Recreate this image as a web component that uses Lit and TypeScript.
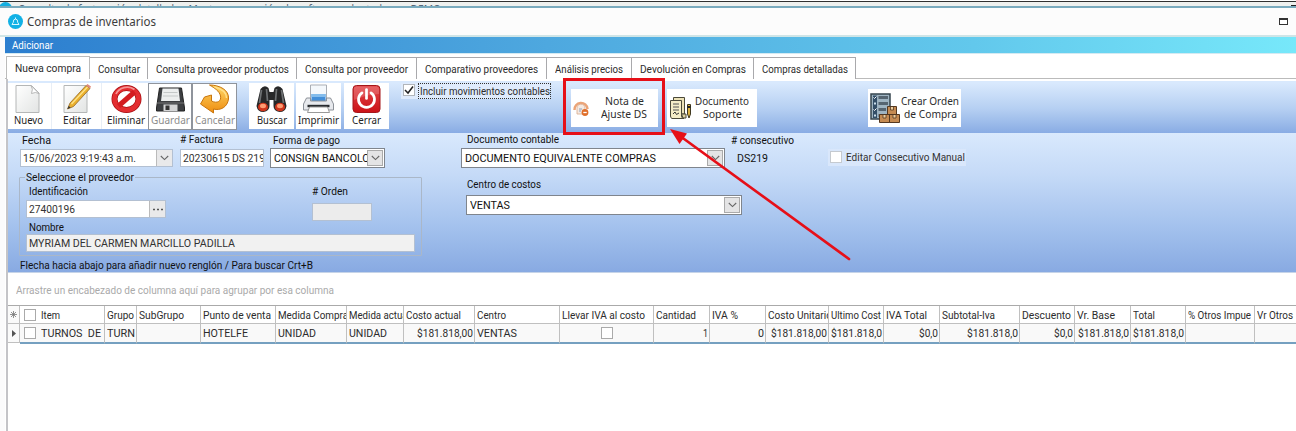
import { LitElement, html, css, svg, nothing } from "lit";
import { customElement, property } from "lit/decorators.js";
import { classMap } from "lit/directives/class-map.js";

/** A run of text that is condensed or widened to take a given width. */
@customElement("fit-text")
class FitText extends LitElement {
  @property() text = "";
  @property({ type: Number }) width = 0;
  static styles = css`
    :host { display: block; white-space: pre; flex: none; }
    span { display: inline-block; transform-origin: 0 50%; }
  `;
  updated() {
    const s = this.renderRoot.querySelector("span") as HTMLElement;
    s.style.transform = "none";
    const natural = s.getBoundingClientRect().width;
    if (!this.width || !natural) return;
    this.style.width = `${this.width}px`;
    s.style.transform = `scaleX(${(this.width / natural).toFixed(4)})`;
  }
  render() { return html`<span>${this.text}</span>`; }
}

const t = (text: string, width: number, cls = "") =>
  html`<fit-text class=${cls} .text=${text} .width=${width}></fit-text>`;

const chevron = html`<svg width="9" height="6" viewBox="0 0 9 6"><path d="M.8 1 4.5 4.6 8.2 1" fill="none" stroke="#666" stroke-width="1.1"/></svg>`;

const icons = {
  nuevo: svg`<path d="M2.500 1.500H18L25.500 9V28.500H2.500Z" fill="url(#pg)" stroke="#b4b6b6"/><path d="M17.500 1.500Q20 5 18 9.500 22 7.500 25.500 9.500Z" fill="#fff" stroke="#aaa" stroke-width=".8"/>`,
  editar: svg`<path d="M2.500 1.500H25.500V28.500H2.500Z" fill="url(#pg)" stroke="#b4b6b6"/><path d="M6 25 8.500 19 24.500 1.500 28.500 4.500 12 22.500Z" fill="#eab02d" stroke="#91672a" stroke-width=".8"/><path d="M10 20 26 3" stroke="#ffe48b" stroke-width="1.300"/><path d="M24.500 1.500 26 0 29.500 2.500 28.500 4.500Z" fill="#df8a7c"/><path d="m6 25 1.200-3 2 1.500Z" fill="#333"/>`,
  eliminar: svg`<ellipse cx="15" cy="15" rx="12" ry="11" fill="none" stroke="#a60e12" stroke-width="6"/><ellipse cx="15" cy="15" rx="12" ry="11" fill="none" stroke="#e32d30" stroke-width="4.600"/><path d="M7 22 23 8" stroke="#d31c20" stroke-width="5"/><path d="M4.500 10A12 11 0 0 1 23 5.500" stroke="#f59494" stroke-width="1.800" fill="none"/>`,
  guardar: svg`<path d="M4 4H26L29 24V27H1V24Z" fill="#3d3f42" stroke="#222"/><path d="M7 4.500H23L24.500 17H5.500Z" fill="#eceeee"/><path d="M8 8.500H22M7.500 12H22.500" stroke="#c4c8c8"/><path d="M1.500 19H28.500" stroke="#777"/><path d="M8 20.500H22V27H8Z" fill="#d5d6d7"/><path d="M10 21.500H14V26H10Z" fill="#333"/>`,
  cancelar: svg`<path d="M10 1C20 1 30 6 29 15 28 23 21 27 14 25L14 29 1 20 5 13 12 11V17C18 20 22 17 21 12 20 7 15 4 10 1Z" fill="url(#og)" stroke="#c8750d"/><path d="M15 3C23 5 27 9 27 14" fill="none" stroke="#ffe08a" stroke-width="1.500"/>`,
  buscar: svg`<path d="M4 5Q8 0 12 4L13 8H17L18 4Q22 0 26 5L30 22Q29 28 23 28 17 27 17 22V16H13V22Q13 27 7 28 1 28 0 22Z" fill="#272829"/><path d="M5 6 3 19M25 6 27 19M10 5 11 17M20 5 19 17" stroke="#6d7072" stroke-width="1.700"/><ellipse cx="6.500" cy="23" rx="5" ry="4.300" fill="#cf351b"/><ellipse cx="23.500" cy="23" rx="5" ry="4.300" fill="#cf351b"/><ellipse cx="6.500" cy="22" rx="3" ry="2.200" fill="#ff9c72"/><ellipse cx="23.500" cy="22" rx="3" ry="2.200" fill="#ff9c72"/>`,
  imprimir: svg`<path d="M7 1H23V16H7Z" fill="#f4f8fc" stroke="#a9adb4"/><path d="M8 10H22V18H8Z" fill="#438ed8"/><path d="M8 10H22V13H8Z" fill="#83bcec"/><path d="M3 14H7V17H23V14H27L30 20V26H0V20Z" fill="#e7e9ed" stroke="#8c9198"/><path d="M4 22H26" stroke="#272a2e" stroke-width="2.400"/><path d="M6 23H24L26 28.500H4Z" fill="#fff" stroke="#999"/>`,
  cerrar: svg`<rect x="1.500" y="1.500" width="27" height="27" rx="3.500" fill="url(#rg)" stroke="#a5161a"/><path d="M2.500 14V4Q3 2.500 5 2.500H25Q27.500 3 27.500 5V10Q16 10 2.500 16Z" fill="#fff" opacity=".16"/><path d="M10.500 8.800A8 8 0 1 0 19.500 8.800" fill="none" stroke="#fff" stroke-width="2.700" stroke-linecap="round"/><path d="M15 5.500V14.500" stroke="#fff" stroke-width="2.700" stroke-linecap="round"/>`,
};

const defs = svg`<defs>
  <linearGradient id="pg" x1="0" y1="0" x2="1" y2="1"><stop offset="0" stop-color="#fff"/><stop offset="1" stop-color="#e2e4e3"/></linearGradient>
  <linearGradient id="og" x1="0" y1="0" x2="0" y2="1"><stop offset="0" stop-color="#ffd765"/><stop offset="1" stop-color="#ee8c10"/></linearGradient>
  <linearGradient id="rg" x1="0" y1="0" x2="0" y2="1"><stop offset="0" stop-color="#e2474b"/><stop offset="1" stop-color="#cb1116"/></linearGradient></defs>`;

type Tool = [keyof typeof icons, string, number];
const tools: Tool[] = [
  ["nuevo", "Nuevo", 29], ["editar", "Editar", 28], ["eliminar", "Eliminar", 38],
  ["guardar", "Guardar", 39], ["cancelar", "Cancelar", 40],
  ["buscar", "Buscar", 30], ["imprimir", "Imprimir", 41], ["cerrar", "Cerrar", 29],
];

const tabs: [string, number, number][] = [
  ["Nueva compra", 66, 84], ["Consultar", 42, 58], ["Consulta proveedor productos", 133, 149],
  ["Consulta por proveedor", 103, 120], ["Comparativo proveedores", 113, 130],
  ["Análisis precios", 68, 85], ["Devolución en Compras", 106, 122], ["Compras detalladas", 86, 102],
];

// column width, heading, heading width, value, value width, value aligned right
const columns: [number, string, number, string, number, boolean?][] = [
  [32, "Grupo", 27, "TURN", 28], [64, "SubGrupo", 45, "", 0], [75, "Punto de venta", 68, "HOTELFE", 45],
  [71, "Medida Compra", 70, "UNIDAD", 38], [57, "Medida actual", 61, "UNIDAD", 38],
  [71, "Costo actual", 55, "$181.818,00", 56, true], [85, "Centro", 29, "VENTAS", 40],
  [94, "Llevar IVA al costo", 83, "check", 0], [56, "Cantidad", 40, "1", 5, true], [56, "IVA %", 26, "0", 6, true],
  [63, "Costo Unitario", 64, "$181.818,00", 56, true], [55, "Ultimo Cost", 50, "$181.818,0", 51, true],
  [56, "IVA Total", 41, "$0,0", 19, true], [80, "Subtotal-Iva", 53, "$181.818,0", 51, true],
  [55, "Descuento", 49, "$0,0", 19, true], [56, "Vr. Base", 38, "$181.818,0", 51, true],
  [55, "Total", 22, "$181.818,0", 51, true], [69, "% Otros Impue", 63, "", 0], [80, "Vr Otros", 36, "", 0],
];

@customElement("app-root")
class AppRoot extends LitElement {
  static styles = css`
    :host { display: block; position: relative; width: 1296px; height: 431px; overflow: hidden; background: #fff;
      font: 11.5px/14px Roboto, "Liberation Sans", sans-serif; color: #2c2c2c; }
    * { box-sizing: border-box; }
    svg { display: block; flex: none; }
    .behind { height: 8px; border-top: 1px solid #fff; border-bottom: 2px solid #79aabd; background: linear-gradient(#303030 1px, #eef0ee 1px);
      overflow: hidden; display: flex; justify-content: space-between; }
    .behind .dot { width: 13px; height: 13px; border-radius: 50%; background: #13aee0; margin: 1px 0 0 -1px; }
    .behind .txt { font: 12.5px/17px "Noto Sans", sans-serif; flex: 1; margin: 0 0 0 6px; color: #567; }
    .behind .min { width: 5px; height: 2px; margin-top: 4px; background: #222; }
    .title { height: 29px; display: flex; align-items: center; background: #fcfcfc; border-bottom: 2px solid #cfe5e7; padding: 0 8px 1px; color: #3c3c3c;
      font: 12.7px/18px "Noto Sans", sans-serif; gap: 4px; }
    .title fit-text { margin-top: -1px; }
    .max { width: 9px; height: 7px; border: 1px solid #333; border-top-width: 2px; margin: 0 4px 0 auto; background: #fff; margin-right: 0; }
    .body { border-left: 5px solid #fbfbfc; }
    .banner { height: 16px; padding: 1px 0 0 7px; color: #fff; background: linear-gradient(90deg, #2c7ecf, #4ea8df 42%, #62c8ec 75%, #77e8fa); }
    .tabs { height: 26px; border-top: 1px solid #d4eaf2; padding: 2px 0 0 1px; display: flex; border-bottom: 1px solid #bbb; }
    .tab { height: 22px; margin-top: 1px; display: flex; align-items: center; justify-content: center; border: solid #a9a9ac; border-width: 1px 1px 0 0; background: #fff; }
    .tab.active { height: 23px; margin-top: 0; border-color: #bbb; border-left-width: 1px; padding-bottom: 1px; }
    .panel { border-left: 2px solid #c4c4c8; margin-left: 1px; height: 352px; }
    .bar { height: 54px; border-top: 2px solid #fff; background: linear-gradient(#d9e9fd 2px, #b5cff2 28px, #89ace4); display: flex; align-items: flex-start; font-family: "Noto Sans", sans-serif; padding-top: 2px; }
    .tool { width: 45px; height: 46px; background: #fff; display: flex; flex-direction: column; align-items: center; padding-top: 1px; color: #222; font-size: 11.5px; }
    .tool fit-text { margin-top: -1px; }
    .nuevo { width: 44px; padding-right: 3px; border-right: 1px solid #e8eef6; }
    .editar { width: 50px; border-right: 1px solid #e8eef6; }
    .eliminar { width: 46px; padding-left: 2px; }
    .guardar, .cancelar { border: 1px solid #8f949c; color: #8c8c8c; width: 44px; padding-top: 0; height: 47px; }
    .cancelar { width: 45px; margin-right: 12px; }
    .buscar { margin-right: 2px; } .imprimir { margin-right: 3px; }
    .check { display: flex; align-items: flex-start; background: #dfebfc; }
    .box { width: 12px; height: 12px; border: 1px solid #b1b5ba; background: #fff; flex: none; }
    .movs { font-family: Roboto, sans-serif; margin-left: 12px; padding: 1px 0 1px 2px; height: 16px; gap: 4px; width: 149px; }
    .dotted { outline: 1px dotted #333; height: 14px; padding-left: 1px; width: 131px; }
    .wide { height: 38px; margin-top: 6px; background: #fff; display: flex; align-items: center; font-size: 11.5px; line-height: 13px; }
    .wide .lines { display: flex; flex-direction: column; align-items: center; margin-top: -2px; }
    .nota { width: 87px; margin-left: 21px; padding-left: 2px; gap: 11px; }
    .docs { width: 90px; margin-left: 9px; padding-left: 2px; gap: 3px; }
    .orden { width: 93px; margin-left: 111px; padding-left: 2px; gap: 1px; }
    .form { height: 140px; display: grid; grid-template-columns: 453px 1fr; background: linear-gradient(#d9e9fd, #c5daf7 30%, #a3c1ed 68%, #88aae2); border-bottom: 1px solid #c6d4e8; color: #111; }
    .row { display: flex; align-items: flex-start; }
    .field { background: #fff; border: 1px solid #b3c0d2; height: 18px; display: flex; overflow: hidden; padding: 1px 0 0 2px; color: #333; }
    .field .btn { background: #e9e9ea; margin: -1px 0 0 auto; width: 16px; border-left: 1px solid #bbb; display: grid; place-items: center; flex: none; }
    .combo { border-color: #7f858d; height: 20px; color: #111; padding-top: 2px; padding-left: 3px; }
    .combo .btn { border: 1px solid #aaa; margin: -1px 1px 1px auto; width: 16px; background: #e4e4e5; }
    .clip { overflow: hidden; flex: 1; min-width: 0; }
    .l1 { padding-left: 14px; height: 15px; }
    .l1 fit-text:nth-child(2) { margin: -1px 0 0 129px; }
    .l1 fit-text:nth-child(3) { margin-left: 50px; }
    .f1 { padding-left: 12px; }
    .date { width: 153px; margin: 1px 7px 0 0; } .fact { width: 84px; margin: 1px 6px 0 0; padding-left: 2px; } .pago { width: 115px; }
    .group { margin: 1px 0 0 11px; width: 403px; height: 87px; position: relative; padding-top: 1px; }
    .group::before { content: ""; position: absolute; inset: 8px 0 0 0; border: 1px solid #aab7c8; border-radius: 1px; clip-path: polygon(0 0, 6px 0, 6px 2px, 116px 2px, 116px 0, 100% 0, 100% 100%, 0 100%); }
    .group > fit-text { margin-left: 7px; }
    .l2 { padding-left: 10px; height: 16px; } .l2 fit-text + fit-text { margin-left: 224px; }
    .f2 { padding-left: 7px; height: 20px; }
    .ident { width: 140px; }
    .ord { width: 60px; margin: 3px 0 0 146px; background: #ececec; }
    .l3 { padding-left: 10px; height: 14px; }
    .name { width: 389px; margin-left: 7px; background: #f1f1f1; height: 18px; }
    .hint { margin: 2px 0 0 12px; }
    .r1 { height: 15px; padding-left: 6px; gap: 172px; margin-top: -1px; }
    .r1 fit-text + fit-text { margin-top: 1px; }
    .r2 { margin-top: 1px; }
    .doc { width: 264px; } .ds { margin: 3px 0 0 12px; }
    .manual { width: 138px; height: 17px; margin: 1px 0 0 60px; padding: 2px 0 0 2px; gap: 4px; color: #333; background: #d9e7fb; }
    .manual .box { border-color: #c5cad0; } .manual fit-text { margin-top: -1px; }
    .r3 { margin: 9px 0 0 6px; height: 18px; }
    .centro { width: 276px; margin-left: 5px; }
    .drag { height: 32px; padding: 10px 0 0 8px; color: #aaa; }
    .grid { display: grid; border-top: 1px solid #aaa; grid-template-rows: 18px 20px; }
    .line { display: flex; width: 1400px; height: 18px; }
    .cell { border: solid #c0c0c0; border-width: 0 1px 1px 0; padding: 2px 1px 0 2px; overflow: hidden; flex: none; display: flex; }
    .line.data { height: 20px; }
    .data .cell { border-bottom: 2px solid #75a0c0; background: #f9f9f9; }
    .cell.right { justify-content: flex-end; }
    .cell.mid { justify-content: center; }
    .cell.mark { width: 12px; align-items: center; justify-content: center; padding: 0; background: #fafafa; }
    .data .cell.mark { border-bottom: 1px solid #c0c0c0; height: 19px; }
    .item { width: 85px; padding-left: 4px; gap: 5px; }
    .cell .box { border-color: #aaa; margin-top: 1px; }
    .over { position: absolute; inset: 0; z-index: 2; pointer-events: none; }
  `;

  private tool([id, label, w]: Tool) {
    return html`<div class="tool ${id}"><svg width="31" height="30" viewBox="0 0 30 30">${defs}${icons[id]}</svg>${t(label, w)}</div>`;
  }

  render() {
    return html`
      <div class="behind"><div class="dot"></div><div class="txt">${t("Consulta de facturación detallada - Mostrar marcación de software adaptado por DEMO", 423)}</div><div class="min"></div></div>
      <div class="title">
        <svg width="15" height="15" viewBox="0 0 15 15"><circle cx="7.500" cy="7.500" r="7.500" fill="#12b1e5"/><path d="M4 10.500H11L9.800 8.500Q9.800 5 7.500 5T5.200 8.500Z" fill="none" stroke="#d9f7ff" stroke-width="1"/><path d="M7.500 3.500V5" stroke="#d9f7ff"/></svg>
        ${t("Compras de inventarios", 129)}<div class="max"></div>
      </div>
      <div class="body">
        <div class="banner">${t("Adicionar", 41)}</div>
        <div class="tabs">${tabs.map(([s, w, bw], i) => html`<div class=${classMap({ tab: true, active: i === 0 })} style="width:${bw}px">${t(s, w)}</div>`)}</div>
        <div class="panel">
          <div class="bar">
            ${tools.map((x) => this.tool(x))}
            <div class="check movs"><div class="box"><svg width="10" height="10" viewBox="0 0 10 10"><path d="M1 5 4 8 9 1.500" fill="none" stroke="#222" stroke-width="1.500"/></svg></div><div class="dotted">${t("Incluir movimientos contables", 130)}</div></div>
            <div class="wide nota">
              <svg width="17" height="17" viewBox="0 0 17 17"><path d="M1.500 10A6.500 6.500 0 1 1 14.500 9" fill="none" stroke="#eba477" stroke-width="2.500"/><path d="M4 8.500A4 4 0 0 1 12 8V14H4Z" fill="#f5e9e1" stroke="#d8a98c" stroke-width=".8"/><path d="M6 9H9M6 11H8" stroke="#8ba2c0"/><circle cx="12" cy="12.500" r="3.400" fill="#e06f2a"/><path d="M10.300 12.500H13.700" stroke="#fff" stroke-width="1.300"/></svg>
              <div class="lines">${t("Nota de", 39)}${t("Ajuste DS", 46)}</div>
            </div>
            <div class="wide docs">
              <svg width="23" height="24" viewBox="0 0 23 24"><path d="M4.500 1.500H15.500V18H4.500Z" fill="#ece2b7" stroke="#4b4939"/><path d="M1.500 4.500H12.500V20Q12.500 22.500 15 22.500H3Q1.500 22 1.500 20Z" fill="#f5edc7" stroke="#4b4939"/><path d="M12.500 18H17V22H14Z" fill="#ded2a0" stroke="#4b4939"/><path d="M4 8H10M4 11H10M4 14H10" stroke="#555"/><path d="M4 18 6 16 7.500 18.500 10 17" fill="none" stroke="#333"/><path d="M18.500 8.500H21.500V18L20 22 18.500 18Z" fill="#dcb343" stroke="#3f3820"/><path d="M18.500 11H21.500" stroke="#222" stroke-width="2"/></svg>
              <div class="lines">${t("Documento", 54)}${t("Soporte", 39)}</div>
            </div>
            <div class="wide orden">
              <svg width="30" height="31" viewBox="0 0 30 31"><path d="M1 1H20V26H1Z" fill="#9fb4c2" stroke="#36444e" stroke-width="1.500"/><path d="M3 2.500H7V25H3Z" fill="#334e67"/><path d="M8.500 4.500H18M8.500 10.500H18M8.500 16.500H16M8.500 22.500H13" stroke="#566571" stroke-width="3"/><path d="m3.500 4.500 1 1 2-2M3.500 16.500l1 1 2-2" stroke="#fff" fill="none"/><path d="M4 9.500H6V11.500H4ZM4 21.500H6V23.500H4Z" fill="#c9ddeb"/><g fill="#c58b53" stroke="#543821"><path d="M17.500 13.500H26.500V21.500H17.500ZM9.500 21.500H19.500V29.500H9.500ZM19.500 21.500H29.500V29.500H19.500Z"/></g><path d="M20.500 14V17H23.500V14M13 22V25H16V22M23 22V25H26V22" fill="#efd0a0" stroke="#543821" stroke-width=".8"/></svg>
              <div class="lines">${t("Crear Orden", 58)}${t("de Compra", 53)}</div>
            </div>
          </div>
          <div class="form">
            <div>
              <div class="row l1">${t("Fecha", 29)}${t("# Factura", 43)}${t("Forma de pago", 67)}</div>
              <div class="row f1">
                <div class="field date">${t("15/06/2023 9:19:43 a.m.", 113)}<div class="btn">${chevron}</div></div>
                <div class="field fact"><div class="clip">${t("20230615 DS 219", 82)}</div></div>
                <div class="field combo pago"><div class="clip">${t("CONSIGN BANCOLOMBIA", 121)}</div><div class="btn">${chevron}</div></div>
              </div>
              <div class="group">
                ${t("Seleccione el proveedor", 108)}
                <div class="row l2">${t("Identificación", 59)}${t("# Orden", 36)}</div>
                <div class="row f2"><div class="field ident">${t("27400196", 46)}<div class="btn"><svg width="10" height="3"><path d="M0 1.500H2M4 1.500H6M8 1.500H10" stroke="#555" stroke-width="1.500"/></svg></div></div><div class="field ord"></div></div>
                <div class="row l3">${t("Nombre", 35)}</div>
                <div class="field name">${t("MYRIAM DEL CARMEN MARCILLO PADILLA", 206)}</div>
              </div>
              <div class="hint">${t("Flecha hacia abajo para añadir nuevo renglón / Para buscar Crt+B", 293)}</div>
            </div>
            <div>
              <div class="row r1">${t("Documento contable", 92)}${t("# consecutivo", 63)}</div>
              <div class="row r2">
                <div class="field combo doc">${t("DOCUMENTO EQUIVALENTE COMPRAS", 191)}<div class="btn">${chevron}</div></div>
                <div class="ds">${t("DS219", 31)}</div>
                <div class="check manual"><div class="box"></div>${t("Editar Consecutivo Manual", 119)}</div>
              </div>
              <div class="row r3">${t("Centro de costos", 74)}</div>
              <div class="field combo centro">${t("VENTAS", 40)}<div class="btn">${chevron}</div></div>
            </div>
          </div>
          <div class="drag">${t("Arrastre un encabezado de columna aquí para agrupar por esa columna", 318)}</div>
          <div class="grid">
            <div class="line">
              <div class="cell mark"><svg width="7" height="7" viewBox="0 0 7 7"><path d="M3.500 0V7M0 3.500H7M1 1 6 6M6 1 1 6" stroke="#777" stroke-width=".8"/></svg></div>
              <div class="cell item"><div class="box"></div>${t("Item", 19)}</div>
              ${columns.map(([w, h, hw]) => html`<div class="cell" style="width:${w}px">${t(h, hw)}</div>`)}
            </div>
            <div class="line data">
              <div class="cell mark"><svg width="4" height="7" viewBox="0 0 4 7"><path d="M0 0 4 3.500 0 7Z" fill="#555"/></svg></div>
              <div class="cell item"><div class="box"></div>${t("TURNOS  DE", 60)}</div>
              ${columns.map(([w, , , v, vw, right]) => html`<div class=${classMap({ cell: true, right: !!right, mid: v === "check" })} style="width:${w}px">${v === "check" ? html`<div class="box"></div>` : v ? t(v, vw) : nothing}</div>`)}
            </div>
          </div>
        </div>
      </div>
      <svg class="over" width="1296" height="431"><rect x="564.500" y="79.500" width="99" height="54" fill="none" stroke="#e60f18" stroke-width="3"/><path d="M849 259 680 136" stroke="#e60f18" stroke-width="2.700" stroke-linecap="round"/><path d="M670 129 687 133.500 679.500 144Z" fill="#e60f18"/></svg>
    `;
  }
}
